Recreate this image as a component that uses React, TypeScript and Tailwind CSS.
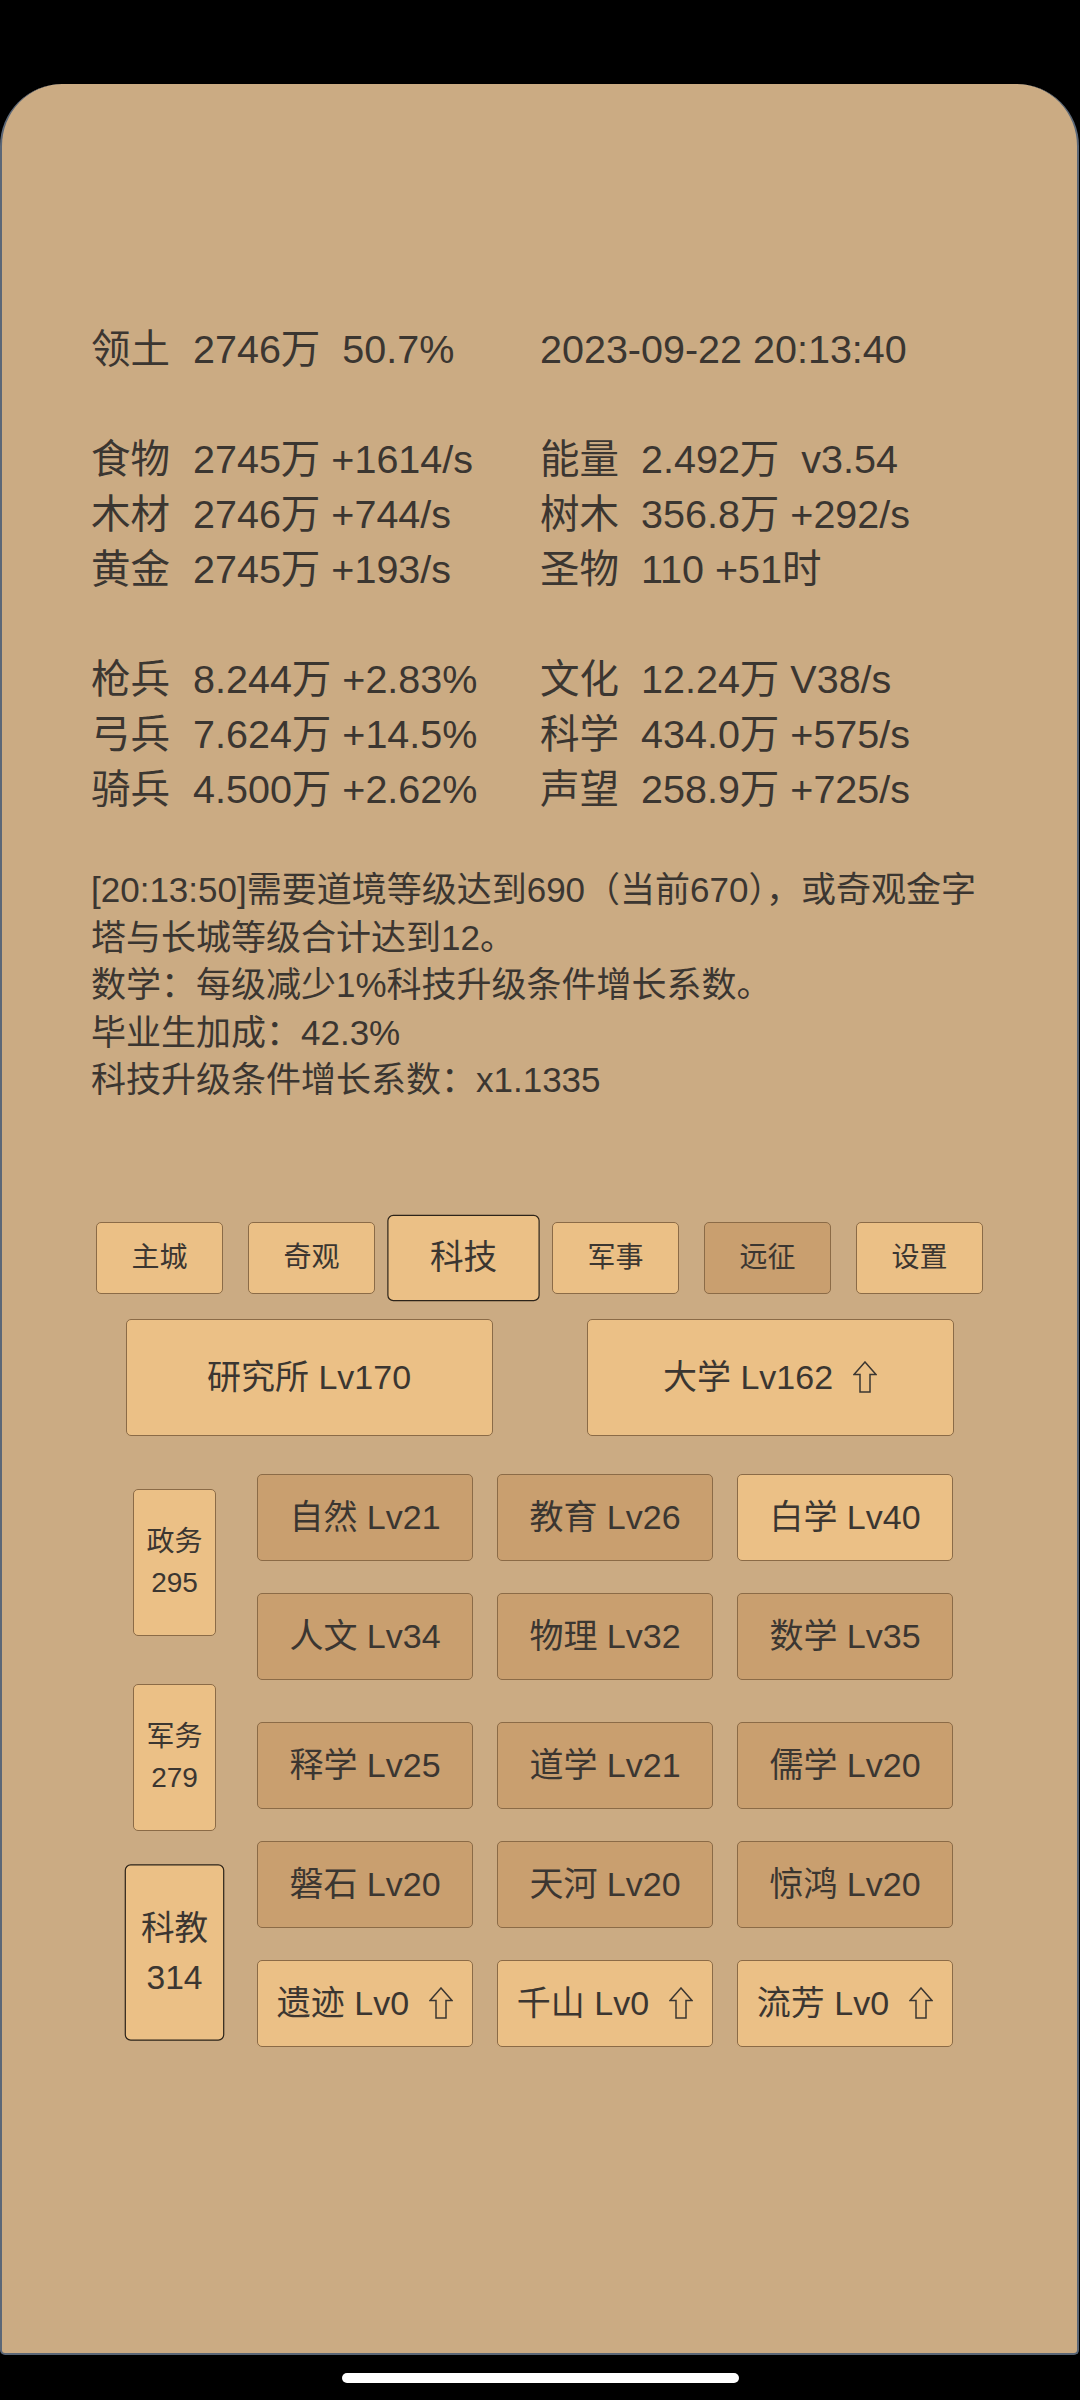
import React from 'react';

const font = "font-['Liberation_Sans','Noto_Sans_CJK_SC',sans-serif]";

const UpArrow: React.FC = () => (
  <svg width="24" height="32" viewBox="0 0 24 32" className="shrink-0">
    <path d="M12 1 L1 13.5 H7 V31 H17 V13.5 H23 Z" fill="none" stroke="#3b3631" strokeWidth="1.5" />
  </svg>
);

type BtnProps = {
  label: string;
  light?: boolean;
  arrow?: boolean;
  selected?: boolean;
  className?: string;
};

const Btn: React.FC<BtnProps> = ({ label, light, arrow, selected, className = '' }) => (
  <div
    className={`flex items-center justify-center gap-[20px] rounded-[5px] border-[1.5px] ${
      selected ? 'border-[#2d241a] scale-[1.2]' : 'border-[#8b6b47]'
    } ${light ? 'bg-[#ebc086]' : 'bg-[#c99f6f]'} ${className}`}
  >
    <span className="whitespace-pre">{label}</span>
    {arrow && <UpArrow />}
  </div>
);

const stats: [string, string, string, string][] = [
  ['食物', '2745万 +1614/s', '能量', '2.492万  v3.54'],
  ['木材', '2746万 +744/s', '树木', '356.8万 +292/s'],
  ['黄金', '2745万 +193/s', '圣物', '110 +51时'],
];

const army: [string, string, string, string][] = [
  ['枪兵', '8.244万 +2.83%', '文化', '12.24万 V38/s'],
  ['弓兵', '7.624万 +14.5%', '科学', '434.0万 +575/s'],
  ['骑兵', '4.500万 +2.62%', '声望', '258.9万 +725/s'],
];

const tabs = [
  { label: '主城', light: true },
  { label: '奇观', light: true },
  { label: '科技', light: true, selected: true },
  { label: '军事', light: true },
  { label: '远征', light: false },
  { label: '设置', light: true },
];

const grid: { label: string; light?: boolean; arrow?: boolean }[][] = [
  [{ label: '自然 Lv21' }, { label: '教育 Lv26' }, { label: '白学 Lv40', light: true }],
  [{ label: '人文 Lv34' }, { label: '物理 Lv32' }, { label: '数学 Lv35' }],
  [{ label: '释学 Lv25' }, { label: '道学 Lv21' }, { label: '儒学 Lv20' }],
  [{ label: '磐石 Lv20' }, { label: '天河 Lv20' }, { label: '惊鸿 Lv20' }],
  [
    { label: '遗迹 Lv0', light: true, arrow: true },
    { label: '千山 Lv0', light: true, arrow: true },
    { label: '流芳 Lv0', light: true, arrow: true },
  ],
];

const StatRows: React.FC<{ rows: [string, string, string, string][] }> = ({ rows }) => (
  <>
    {rows.map((r) => (
      <React.Fragment key={r[0]}>
        <div>{r[0]}</div>
        <div className="whitespace-pre">{r[1]}</div>
        <div>{r[2]}</div>
        <div className="whitespace-pre">{r[3]}</div>
      </React.Fragment>
    ))}
  </>
);

const App: React.FC = () => {
  return (
    <div className={`min-h-[2400px] w-[1080px] bg-black pt-[84px] ${font} text-[#3b3631]`}>
      <div className="h-[2271px] w-[1079px] rounded-t-[62px] rounded-b-[5px] border-x-2 border-b-2 border-[#5b6777] bg-[#cbab83] pt-[238px]">
        {/* stats */}
        <div className="grid grid-cols-[102px_347px_101px_1fr] pl-[89px] text-[39.5px] leading-[55px]">
          <div>领土</div>
          <div className="whitespace-pre">2746万  50.7%</div>
          <div className="col-span-2">2023-09-22 20:13:40</div>
          <div className="col-span-4 h-[55px]"></div>
          <StatRows rows={stats} />
          <div className="col-span-4 h-[55px]"></div>
          <StatRows rows={army} />
        </div>

        {/* log */}
        <div className="mt-[49px] pl-[89px] text-[35px] leading-[47.5px] whitespace-nowrap">
          <div>[20:13:50]需要道境等级达到690（当前670），或奇观金字</div>
          <div>塔与长城等级合计达到12。</div>
          <div>数学：每级减少1%科技升级条件增长系数。</div>
          <div>毕业生加成：42.3%</div>
          <div>科技升级条件增长系数：x1.1335</div>
        </div>

        {/* tabs */}
        <div className="mt-[118px] flex items-center justify-center gap-[25px] text-[28px]">
          {tabs.map((t) => (
            <Btn
              key={t.label}
              label={t.label}
              light={t.light}
              selected={t.selected}
              className="h-[72px] w-[127px]"
            />
          ))}
        </div>

        {/* buildings */}
        <div className="mt-[25px] flex justify-center gap-[94px] text-[34px]">
          <Btn label="研究所 Lv170" light className="h-[117px] w-[367px]" />
          <Btn label="大学 Lv162" light arrow className="h-[117px] w-[367px]" />
        </div>

        {/* tech */}
        <div className="mt-[38px] flex gap-[41px] pl-[131px]">
          <div className="flex flex-col gap-[48px] pt-[15px] text-[28px] leading-[41px]">
            {[
              ['政务', '295'],
              ['军务', '279'],
              ['科教', '314'],
            ].map(([a, b], i) => (
              <div
                key={a}
                className={`flex h-[147px] w-[83px] flex-col items-center justify-center rounded-[5px] border-[1.5px] bg-[#ebc086] ${
                  i === 2 ? 'scale-[1.2] border-[#2d241a]' : 'border-[#8b6b47]'
                }`}
              >
                <span>{a}</span>
                <span>{b}</span>
              </div>
            ))}
          </div>
          <div className="flex flex-col gap-[32px] text-[34px]">
            {grid.map((row, ri) => (
              <div key={ri} className={`flex gap-[24px] ${ri === 2 ? 'mt-[10px]' : ''}`}>
                {row.map((c) => (
                  <Btn
                    key={c.label}
                    label={c.label}
                    light={c.light}
                    arrow={c.arrow}
                    className="h-[87px] w-[216px]"
                  />
                ))}
              </div>
            ))}
          </div>
        </div>
      </div>
      <div className="mx-auto mt-[18px] h-[10px] w-[397px] rounded-full bg-white"></div>
    </div>
  );
};

export default App;
